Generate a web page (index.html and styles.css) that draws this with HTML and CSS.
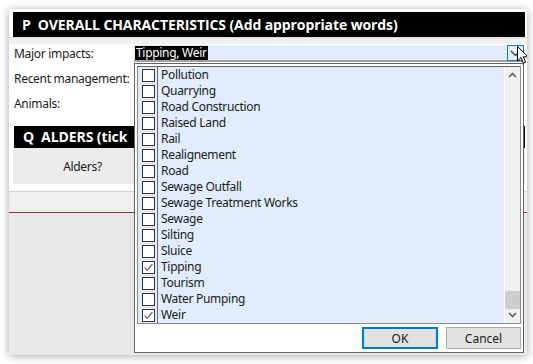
FILE: index.html
```html
<!DOCTYPE html>
<html>
<head>
<meta charset="utf-8">
<link rel="stylesheet" href="styles.css">
</head>
<body>
<div class="window">
  <div class="hdr">P&nbsp;&nbsp;OVERALL CHARACTERISTICS (Add appropriate words)</div>
  <div class="sep"></div>
  <div class="row r1">
    <span class="lbl">Major impacts:</span>
    <div class="combo">
      <span class="sel">Tipping, Weir</span>
      <span class="dropbtn"><svg width="11" height="7" viewBox="0 0 11 7"><path d="M1 1 L5.5 5.5 L10 1" fill="none" stroke="#333" stroke-width="1.2"/></svg></span>
    </div>
  </div>
  <div class="row r2"><span class="lbl">Recent management:</span></div>
  <div class="row r3"><span class="lbl">Animals:</span></div>
  <div class="hdr2-row"><div class="hdr2">Q&nbsp;&nbsp;ALDERS (tick</div></div>
  <div class="alders"><span>Alders?</span></div>
  <div class="gap"></div>
  <div class="band"></div>
  <div class="rest"></div>

  <div class="dropdown">
    <div class="list">
      <div class="items">
        <div class="item"><span class="cb"></span><span class="txt">Pollution</span></div>
        <div class="item"><span class="cb"></span><span class="txt">Quarrying</span></div>
        <div class="item"><span class="cb"></span><span class="txt">Road Construction</span></div>
        <div class="item"><span class="cb"></span><span class="txt">Raised Land</span></div>
        <div class="item"><span class="cb"></span><span class="txt">Rail</span></div>
        <div class="item"><span class="cb"></span><span class="txt">Realignement</span></div>
        <div class="item"><span class="cb"></span><span class="txt">Road</span></div>
        <div class="item"><span class="cb"></span><span class="txt">Sewage Outfall</span></div>
        <div class="item"><span class="cb"></span><span class="txt">Sewage Treatment Works</span></div>
        <div class="item"><span class="cb"></span><span class="txt">Sewage</span></div>
        <div class="item"><span class="cb"></span><span class="txt">Silting</span></div>
        <div class="item"><span class="cb"></span><span class="txt">Sluice</span></div>
        <div class="item"><span class="cb"><svg width="11" height="11" viewBox="0 0 11 11"><path d="M1.5 5.5 L4.2 8.3 L9.5 2" fill="none" stroke="#6d6d6d" stroke-width="1.2"/></svg></span><span class="txt">Tipping</span></div>
        <div class="item"><span class="cb"></span><span class="txt">Tourism</span></div>
        <div class="item"><span class="cb"></span><span class="txt">Water Pumping</span></div>
        <div class="item"><span class="cb"><svg width="11" height="11" viewBox="0 0 11 11"><path d="M1.5 5.5 L4.2 8.3 L9.5 2" fill="none" stroke="#6d6d6d" stroke-width="1.2"/></svg></span><span class="txt">Weir</span></div>
      </div>
      <div class="scroll">
        <svg class="arr" width="9" height="6" viewBox="0 0 9 6"><path d="M1 5 L4.5 1.5 L8 5" fill="none" stroke="#606060" stroke-width="1.6"/></svg>
        <div class="track"><div class="thumb"></div></div>
        <svg class="arr" width="9" height="6" viewBox="0 0 9 6"><path d="M1 1 L4.5 4.5 L8 1" fill="none" stroke="#606060" stroke-width="1.6"/></svg>
      </div>
    </div>
    <div class="buttons">
      <button class="btn ok">OK</button>
      <button class="btn">Cancel</button>
    </div>
  </div>

  <svg class="cursor" width="12" height="19" viewBox="0 0 12 19"><path d="M0.5 0.5 L0.5 15 L4 11.6 L6.4 17.2 L8.6 16.2 L6.3 10.8 L11 10.8 Z" fill="#fff" stroke="#000" stroke-width="1"/></svg>
</div>
</body>
</html>
```
FILE: styles.css
```css
* { box-sizing: border-box; }
html, body { margin: 0; padding: 0; background: #fff; }
body { width: 533px; height: 364px; overflow: hidden; font-family: "Noto Sans", "Open Sans", sans-serif; font-size: 12px; letter-spacing: -0.3px; color: #1a1a1a; }

.window {
  position: relative;
  margin: 9px 0 0 9px;
  width: 518px;
  height: 346px;
  background: #fff;
  box-shadow: 0 1px 8px rgba(0,0,0,0.35);
  padding: 3px 2px 0 4px;
  display: flex;
  flex-direction: column;
  overflow: hidden;
}

.hdr {
  height: 25px;
  background: #000;
  color: #fff;
  font-family: "Open Sans", sans-serif;
  font-weight: 700;
  font-size: 14px;
  letter-spacing: -0.1px;
  line-height: 25px;
  padding-left: 9px;
  white-space: nowrap;
}
.sep { height: 7px; border-top: 1px solid #d8d8d8; background: #f0f0f0; margin: 0 -2px 0 -4px; }

.row { display: flex; align-items: center; height: 17px; padding-left: 1px; }
.r1 { margin-top: 1px; }
.r2 { margin-top: 8px; }
.r3 { margin-top: 8px; }
.lbl { width: 120px; white-space: nowrap; }

.combo {
  flex: 1;
  height: 17px;
  margin-right: 1px;
  background: #e2edfb;
  border-bottom: 2px solid #a0a0a0;
  display: flex;
  align-items: center;
  justify-content: space-between;
  padding-left: 1px;
}
.sel { background: #000; color: #fff; line-height: 14px; padding: 0 1px; }
.dropbtn {
  width: 17px; height: 16px;
  margin-top: 1px;
  border: 1px solid #0a78d4;
  background: #e5f1fb;
  display: flex; align-items: center; justify-content: center;
}

.hdr2-row {
  margin-top: 14px;
  margin-left: 1px;
  height: 22px;
  background: #000;
}
.hdr2 {
  width: 120px;
  color: #fff;
  font-family: "Open Sans", sans-serif;
  font-weight: 700;
  font-size: 14px;
  letter-spacing: -0.1px;
  line-height: 22px;
  padding-left: 9px;
  white-space: nowrap;
  overflow: hidden;
}
.alders {
  height: 36px;
  background: #ebebeb;
  display: flex;
  align-items: center;
}
.alders span { width: 139px; text-align: center; }
.gap { height: 8px; border-bottom: 1px solid #d0d0d0; margin: 0 -2px 0 -4px; }
.band { height: 21px; background: #efefef; margin: 0 -2px 0 -4px; border-bottom: 1px solid #8b3030; }
.rest { flex: 1; background: #e8e8e8; margin: 0 -2px 0 -4px; }

.dropdown {
  position: absolute;
  left: 125px;
  top: 54px;
  width: 390px;
  height: 290px;
  background: #fff;
  border: 1px solid #646464;
  padding: 2px 2px 0 2px;
  display: flex;
  flex-direction: column;
}
.list {
  height: 258px;
  border: 1px solid #8a8a8a;
  border-top-color: #646464;
  display: flex;
}
.items { flex: 1; background: linear-gradient(to right, #e1edfc 0 19px, #6e6e6e 19px 20px, #e1edfc 20px); }
.item { height: 16px; display: flex; align-items: center; }
.cb {
  width: 13px; height: 13px;
  margin-left: 4px;
  border: 1px solid #333;
  background: #fff;
  display: flex; align-items: center; justify-content: center;
}
.txt { margin-left: 6px; line-height: 16px; white-space: nowrap; }

.scroll {
  width: 16px;
  background: #f0f0f0;
  border-left: 1px solid #fff;
  display: flex;
  flex-direction: column;
  align-items: center;
  padding: 5px 0 5px;
}
.arr { flex: none; }
.track { flex: 1; width: 100%; display: flex; flex-direction: column; justify-content: flex-end; padding-bottom: 3px; }
.thumb { height: 18px; background: #cdcdcd; }

.buttons { display: flex; justify-content: flex-end; gap: 8px; padding: 3px 0 0 0; }
.btn {
  height: 22px;
  background: #e1e1e1;
  border: 1px solid #adadad;
  font-family: "Noto Sans", sans-serif;
  font-size: 12px;
  color: #1a1a1a;
  padding: 0;
}
.btn.ok { width: 76px; border: 2px solid #0078d7; }
.btn:last-child { width: 75px; }

.cursor { position: absolute; left: 508px; top: 37px; }
```
